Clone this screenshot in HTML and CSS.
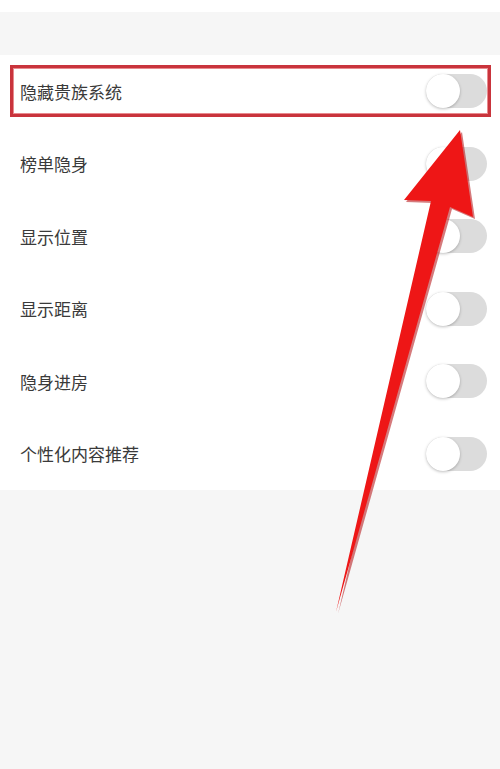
FILE: index.html
```html
<!DOCTYPE html>
<html lang="zh-CN">
<head>
    <meta charset="UTF-8">
    <meta name="viewport" content="width=device-width, initial-scale=1.0">
    <title>隐私设置</title>
    <link rel="stylesheet" href="styles.css">
</head>
<body>
    <div class="topbar"></div>
    <div class="gap"></div>
    <main class="list">
        <div class="row">
            <span class="label">隐藏贵族系统</span>
            <span class="switch"></span>
            <div class="mark"></div>
        </div>
        <div class="row">
            <span class="label">榜单隐身</span>
            <span class="switch"></span>
        </div>
        <div class="row">
            <span class="label">显示位置</span>
            <span class="switch"></span>
        </div>
        <div class="row">
            <span class="label">显示距离</span>
            <span class="switch"></span>
        </div>
        <div class="row">
            <span class="label">隐身进房</span>
            <span class="switch"></span>
        </div>
        <div class="row">
            <span class="label">个性化内容推荐</span>
            <span class="switch"></span>
        </div>
    </main>
    <svg class="arrow" width="500" height="769" viewBox="0 0 500 769">
        <polygon points="460,130 473,217 450,207 336,612 431,201 404,200" fill="#b30d10" transform="translate(2,2)" opacity="0.55"/>
        <polygon points="460,130 473,217 450,207 336,612 431,201 404,200" fill="#ee1616"/>
    </svg>
</body>
</html>
```

FILE: styles.css
```css
*{
    margin: 0;
    padding: 0;
    box-sizing: border-box;
}
body{
    width: 500px;
    height: 769px;
    background-color: #f6f6f6;
    font-family: "Noto Sans CJK SC", "Noto Sans", sans-serif;
    position: relative;
    overflow: hidden;
}
.topbar{
    height: 12px;
    background-color: #ffffff;
}
.gap{
    height: 43px;
    background-color: #f6f6f6;
}
.list{
    background-color: #ffffff;
}
.row{
    position: relative;
    height: 72.5px;
    display: flex;
    align-items: center;
    justify-content: space-between;
    padding: 0 13px 0 20px;
}
.label{
    font-size: 17px;
    color: #3a3a3a;
}
.switch{
    position: relative;
    width: 61px;
    height: 34px;
    border-radius: 17px;
    background-color: #dcdcdc;
}
.switch::before{
    content: "";
    position: absolute;
    left: 0;
    top: 0;
    width: 34px;
    height: 34px;
    border-radius: 50%;
    background-color: #ffffff;
    box-shadow: 0 1px 3px rgba(0, 0, 0, 0.25);
}
.mark{
    position: absolute;
    left: 10px;
    top: 10px;
    width: 481px;
    height: 52px;
    border: 3px solid #c9343c;
    box-shadow: inset 0 0 0 1px #e88a8e;
}
.arrow{
    position: absolute;
    left: 0;
    top: 0;
}
```
